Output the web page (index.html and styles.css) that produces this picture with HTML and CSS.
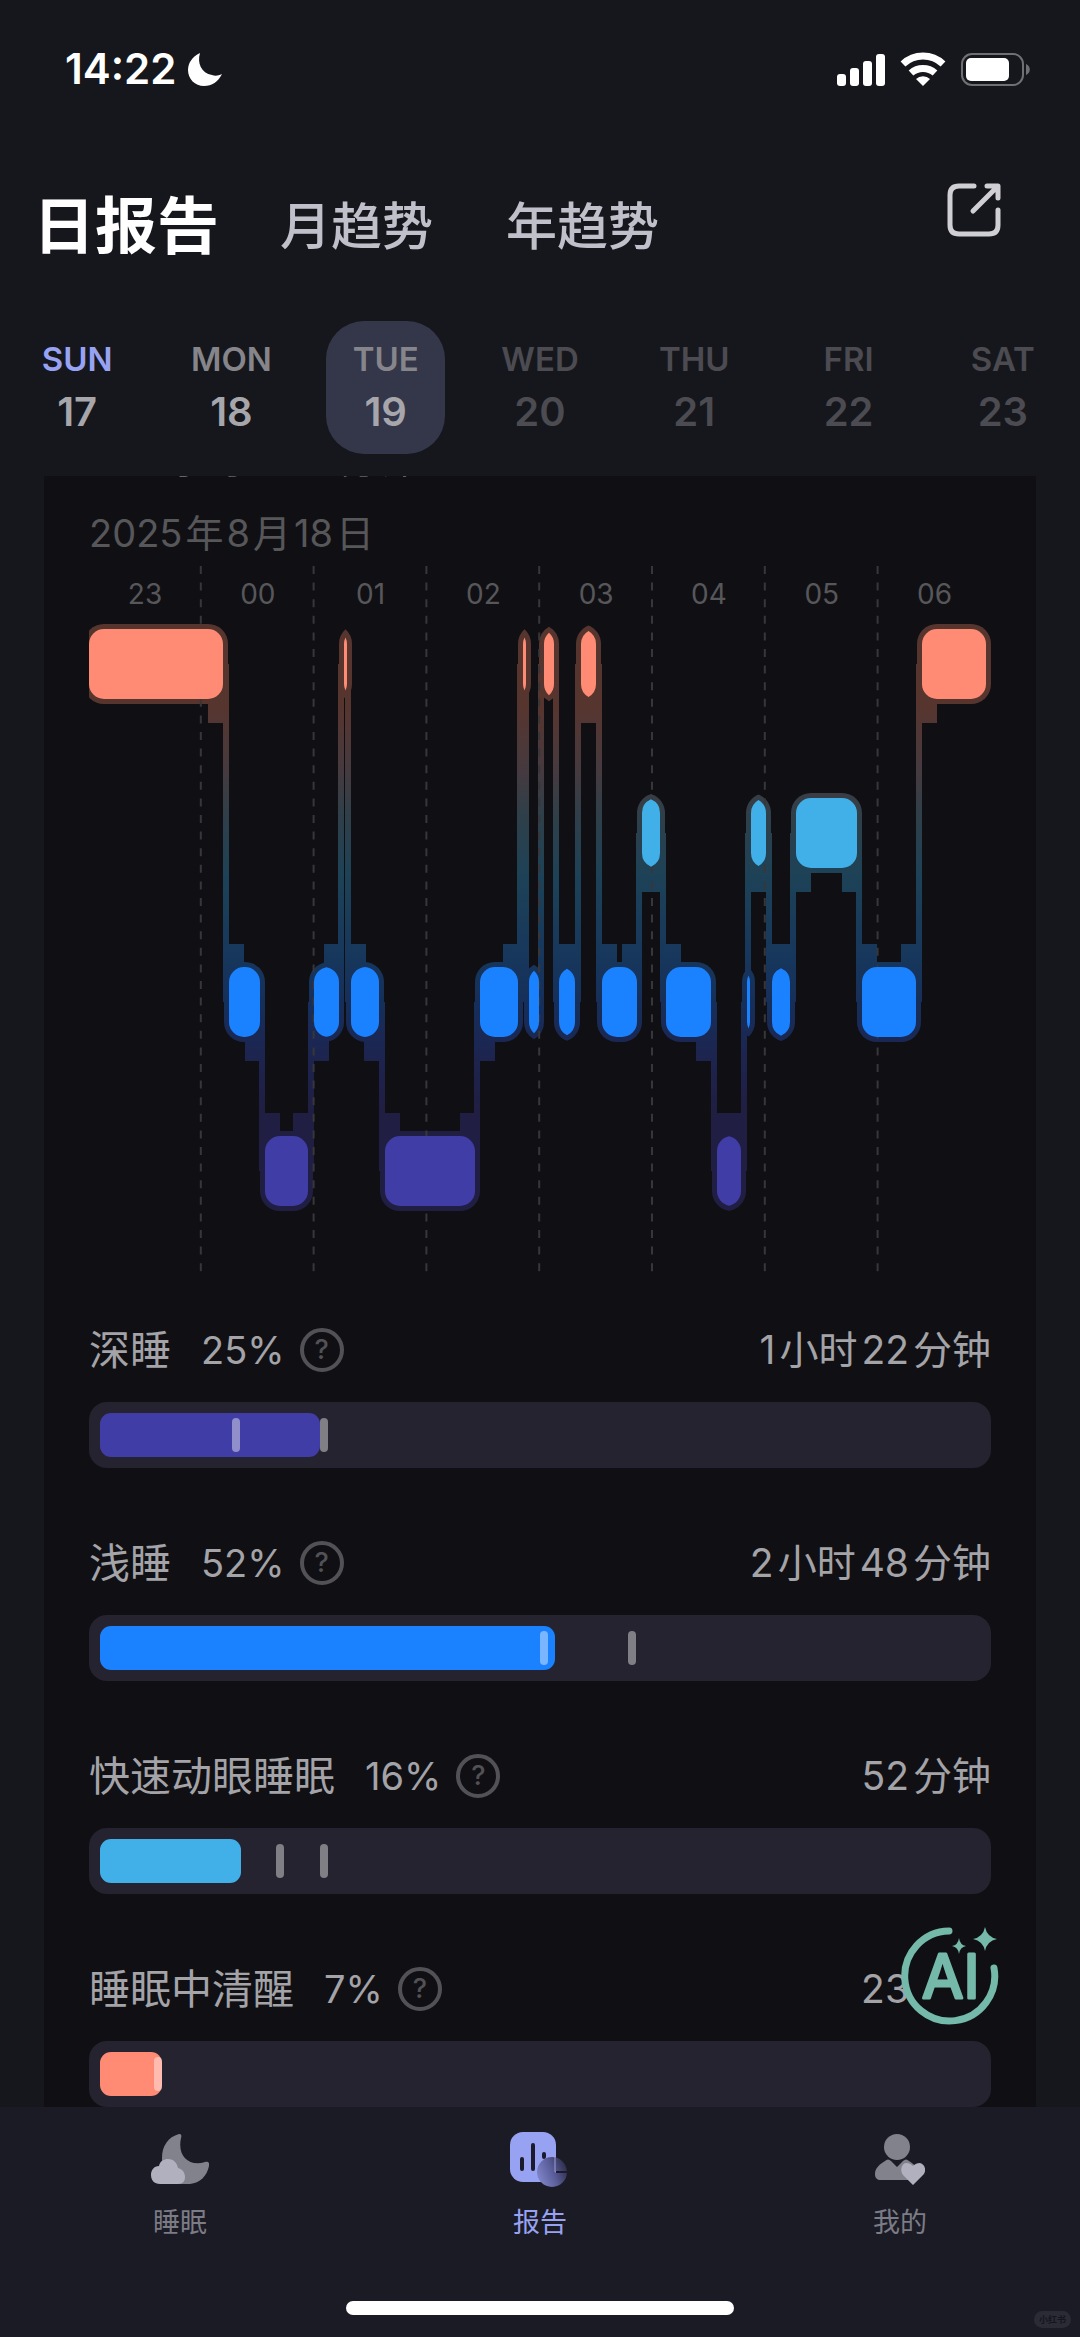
FILE: index.html
```html
<!DOCTYPE html>
<html lang="zh-CN">
<head>
    <meta charset="UTF-8">
    <meta name="viewport" content="width=device-width, initial-scale=1.0">
    <title>日报告</title>
    <link rel="stylesheet" href="styles.css">
</head>
<body>
    <div class="status-bar">
        <span class="time">14:22</span>
        <svg class="dnd" viewBox="0 0 34 34" width="34" height="34"><path d="M12 1C4 5 0 11 0 18c0 9 7 16 16 16 8 0 14-4 18-12-4 2-7 2-10 1C13 21 9 11 12 1z" fill="#fff"/></svg>
        <div class="status-icons">
            <svg viewBox="0 0 48 33" width="48" height="33" fill="#fff">
                <rect x="0" y="21" width="9" height="12" rx="3"/>
                <rect x="13" y="15" width="9" height="18" rx="3"/>
                <rect x="26" y="8" width="9" height="25" rx="3"/>
                <rect x="39" y="1" width="9" height="32" rx="3"/>
            </svg>
            <svg viewBox="0 0 46 34" width="46" height="34" fill="none" stroke="#fff" stroke-width="7">
                <path d="M3 12a29 29 0 0 1 40 0"/>
                <path d="M11 21a18 18 0 0 1 24 0"/>
                <path d="M16 27a10 10 0 0 1 14 0l-7 7z" fill="#fff" stroke="none"/>
            </svg>
            <svg viewBox="0 0 69 33" width="69" height="33">
                <rect x="1" y="1" width="61" height="31" rx="10" fill="none" stroke="#6f7074" stroke-width="2"/>
                <rect x="5" y="5" width="43" height="23" rx="5" fill="#fff"/>
                <path d="M65 11c5 2 5 9 0 11z" fill="#6f7074"/>
            </svg>
        </div>
    </div>

    <header class="header">
        <nav class="tabs">
            <button class="tab active">日报告</button>
            <button class="tab">月趋势</button>
            <button class="tab">年趋势</button>
        </nav>
        <button class="share" aria-label="分享">
            <svg viewBox="0 0 54 54" width="54" height="54" fill="none" stroke="#cfcfd4" stroke-width="5" stroke-linecap="round" stroke-linejoin="round">
                <path d="M27 3H12c-6 0-9 3-9 9v30c0 6 3 9 9 9h30c6 0 9-3 9-9V27"/>
                <path d="M26 28L50 4M40 3h11v12"/>
            </svg>
        </button>
    </header>

    <div class="week">
        <button class="day sunday"><span class="name">SUN</span><span class="num">17</span></button>
        <button class="day"><span class="name">MON</span><span class="num">18</span></button>
        <button class="day selected"><span class="name">TUE</span><span class="num">19</span></button>
        <button class="day future"><span class="name">WED</span><span class="num">20</span></button>
        <button class="day future"><span class="name">THU</span><span class="num">21</span></button>
        <button class="day future"><span class="name">FRI</span><span class="num">22</span></button>
        <button class="day future"><span class="name">SAT</span><span class="num">23</span></button>
    </div>

    <main class="scroll">
        <section class="card">
            <div class="total">05<span>小时</span> 25<span>分钟</span></div>
            <div class="date"><b>2025</b>年<b>8</b>月<b>18</b>日</div>

            <svg class="chart" id="chart" viewBox="0 0 902 706">
                <defs>
                    <linearGradient id="stageFade" gradientUnits="userSpaceOnUse" x1="0" y1="0" x2="0" y2="706">
                        <stop offset="0.2" stop-color="#57352f"/>
                        <stop offset="0.29" stop-color="#453a3f"/>
                        <stop offset="0.35" stop-color="#303f49"/>
                        <stop offset="0.44" stop-color="#1d4257"/>
                        <stop offset="0.55" stop-color="#17375c"/>
                        <stop offset="0.62" stop-color="#162f5a"/>
                        <stop offset="0.69" stop-color="#1c2550"/>
                        <stop offset="0.77" stop-color="#201e43"/>
                    </linearGradient>
                </defs>
                <g id="halo" fill="url(#stageFade)"></g>
                <g id="grid" class="grid"></g>
                <g id="blocks"></g>
                <g id="hours" class="hours"></g>
            </svg>

            <div class="stat">
                <div class="stat-head">
                    <span class="label">深睡</span><span class="percent">25%</span>
                    <button class="help" aria-label="说明">?</button>
                    <span class="duration"><b>1</b>小时<b>22</b>分钟</span>
                </div>
                <div class="bar"><div class="track">
                    <div class="fill deep" style="width: 25%"></div>
                    <i class="mark" style="left: 15%"></i>
                    <i class="mark" style="left: 25%"></i>
                </div></div>
            </div>

            <div class="stat">
                <div class="stat-head">
                    <span class="label">浅睡</span><span class="percent">52%</span>
                    <button class="help" aria-label="说明">?</button>
                    <span class="duration"><b>2</b>小时<b>48</b>分钟</span>
                </div>
                <div class="bar"><div class="track">
                    <div class="fill light" style="width: 51.7%"></div>
                    <i class="mark" style="left: 50%"></i>
                    <i class="mark" style="left: 60%"></i>
                </div></div>
            </div>

            <div class="stat">
                <div class="stat-head">
                    <span class="label">快速动眼睡眠</span><span class="percent">16%</span>
                    <button class="help" aria-label="说明">?</button>
                    <span class="duration"><b>52</b>分钟</span>
                </div>
                <div class="bar"><div class="track">
                    <div class="fill rem" style="width: 16%"></div>
                    <i class="mark" style="left: 20%"></i>
                    <i class="mark" style="left: 25%"></i>
                </div></div>
            </div>

            <div class="stat">
                <div class="stat-head">
                    <span class="label">睡眠中清醒</span><span class="percent">7%</span>
                    <button class="help" aria-label="说明">?</button>
                    <span class="duration"><b>23</b><span class="covered">分钟</span></span>
                </div>
                <div class="bar"><div class="track">
                    <div class="fill awake" style="width: 7.1%"></div>
                    <i class="mark" style="left: 6.1%"></i>
                </div></div>
            </div>
        </section>

        <button class="ai" aria-label="AI">
            <svg viewBox="0 0 100 100" width="100" height="100">
                <path d="M50 6A45 45 0 1 0 95 43" fill="none" stroke="#74b9a9" stroke-width="7" stroke-linecap="round"/>
                <text x="23" y="73" class="ai-text">AI</text>
                <path d="M60 13q1 7 7 8q-6 1-7 8q-1-7-7-8q6-1 7-8zM86 2q2 10 12 12q-10 2-12 12q-2-10-12-12q10-2 12-12z" fill="#74b9a9"/>
            </svg>
        </button>
    </main>

    <footer class="tabbar">
        <nav class="tabbar-items">
            <a href="#sleep">
                <svg viewBox="0 0 58 58" width="58" height="58">
                    <path d="M28 3C17 6 11 15 11 27v24c0 1 1 2 2 2h26c10-1 17-8 19-18 1-3-1-5-4-4-16 5-28-6-24-24 1-3 0-4-2-4z" fill="#82828d"/>
                    <path d="M9 53C3 53 0 49 0 44c0-5 3-9 8-9 1-5 5-7 9-7 6 0 9 4 10 9 4 1 7 4 7 9 0 4-2 7-7 7z" fill="#b1b0be"/>
                </svg>
                <span>睡眠</span>
            </a>
            <a href="#report" class="current">
                <svg viewBox="0 0 62 58" width="62" height="58">
                    <defs>
                        <linearGradient id="pie" x1="0" y1="0.7" x2="1" y2="0.3">
                            <stop offset="0" stop-color="#8087cb"/>
                            <stop offset="0.5" stop-color="#5c5f9c"/>
                            <stop offset="1" stop-color="#2c2c48"/>
                        </linearGradient>
                    </defs>
                    <rect x="1" y="1" width="46" height="50" rx="13" fill="#98a2f2"/>
                    <path d="M13 28v10M24 14v24M35 23v3" stroke="#1b1b2c" stroke-width="4" stroke-linecap="round"/>
                    <circle cx="43" cy="41" r="15" fill="url(#pie)"/>
                    <path d="M46 26v15h13" fill="none" stroke="#9aa0d8" stroke-width="1"/>
                    <path d="M47 41h12" stroke="#1b1b2c" stroke-width="2"/>
                </svg>
                <span>报告</span>
            </a>
            <a href="#mine">
                <svg viewBox="0 0 50 58" width="50" height="58">
                    <circle cx="22" cy="16" r="13" fill="#82828d"/>
                    <path d="M10 30c2-2 4-2 6 0l6 6 6-6c2-2 4-2 6 0 5 3 9 7 9 13 0 4-2 6-5 6H6c-4 0-6-2-6-6 0-6 5-10 10-13z" fill="#82828d"/>
                    <path d="M38 54L28 44c-3-4-2-11 3-12 3 0 5 1 7 3 2-2 4-3 7-3 5 1 7 8 3 12z" fill="#b1b0be"/>
                </svg>
                <span>我的</span>
            </a>
        </nav>
        <div class="home-indicator"></div>
        <span class="watermark">小红书</span>
    </footer>

<script>
    // top edge and color of each sleep stage row
    const rows = {
        awake: { y: 63, color: '#ff8b75' },
        rem: { y: 232, color: '#41b0e9' },
        light: { y: 401, color: '#1b82ff' },
        deep: { y: 570, color: '#413da6' }
    };
    const blockHeight = 70;

    // [stage, start, end]
    const stages = [
        ['awake', 0, 134], ['light', 140, 171], ['deep', 176, 219], ['light', 225, 250],
        ['awake', 255, 258], ['light', 262, 290], ['deep', 296, 386], ['light', 391, 429],
        ['awake', 434, 437], ['light', 440, 450], ['awake', 455, 465], ['light', 470, 486],
        ['awake', 492, 507], ['light', 513, 548], ['rem', 553, 571], ['light', 577, 622],
        ['deep', 628, 652], ['light', 658, 661], ['rem', 662, 677], ['light', 683, 701],
        ['rem', 707, 768], ['light', 773, 827], ['awake', 833, 897]
    ];

    // Rounded block, narrow ones end in a point where the two corners meet
    function blockPath(x1, x2, y1, y2, r) {
        const half = Math.min(r, (x2 - x1) / 2);
        const rise = Math.sqrt(r * r - (r - half) * (r - half));
        const arc = `A${r} ${r} 0 0 1`;
        return `M${x1} ${y1 + r}${arc} ${x1 + half} ${y1 + r - rise}H${x2 - half}${arc} ${x2} ${y1 + r}` +
            `V${y2 - r}${arc} ${x2 - half} ${y2 - r + rise}H${x1 + half}${arc} ${x1} ${y2 - r}Z`;
    }

    function rect(x, y, w, h) {
        return `<rect x="${x}" y="${y}" width="${w}" height="${h}"/>`;
    }

    let halo = '';
    let blocks = '';
    stages.forEach(([stage, x1, x2], i) => {
        const y = rows[stage].y;
        halo += `<path d="${blockPath(x1 - 5, x2 + 5, y - 5, y + blockHeight + 5, 20)}"/>`;
        blocks += `<path d="${blockPath(x1, x2, y, y + blockHeight, 15)}" fill="${rows[stage].color}"/>`;

        // small steps where a connector joins the block
        const step = Math.min(15, x2 - x1);
        [stages[i - 1], stages[i + 1]].forEach((other, side) => {
            if (!other || step < 15) return;
            const x = side === 0 ? x1 : x2 - step;
            const below = rows[other[0]].y > y;
            halo += rect(x, below ? y + blockHeight - 15 : y - 23, step, 39);
        });

        // connector to the next stage
        const next = stages[i + 1];
        if (next) {
            const top = Math.min(y, rows[next[0]].y) + blockHeight / 2;
            const bottom = Math.max(y, rows[next[0]].y) + blockHeight / 2;
            halo += rect(next[1] - 6, top, 6, bottom - top);
        }
    });
    document.getElementById('halo').innerHTML = halo;
    document.getElementById('blocks').innerHTML = blocks;

    let grid = '';
    let hours = '';
    ['23', '00', '01', '02', '03', '04', '05', '06'].forEach((hour, i) => {
        const x = i * 112.8 - 1;
        if (i > 0) grid += `<line x1="${x}" y1="0" x2="${x}" y2="706"/>`;
        hours += `<text x="${x + 57}" y="38">${hour}</text>`;
    });
    document.getElementById('grid').innerHTML = grid;
    document.getElementById('hours').innerHTML = hours;
</script>
</body>
</html>
```
FILE: styles.css
```css
* {
    box-sizing: border-box;
}
body {
    margin: 0;
    height: 100vh;
    display: flex;
    flex-direction: column;
    overflow: hidden;
    background: #16171c;
    color: #a3a3a8;
    font-family: Inter, "Noto Sans CJK SC", sans-serif;
}
button {
    padding: 0;
    border: none;
    background: none;
    color: inherit;
    font-family: inherit;
    cursor: pointer;
}
svg {
    display: block;
}
.status-bar {
    display: flex;
    align-items: center;
    height: 50px;
    margin-top: 44px;
    padding: 0 50px 0 65px;
}
.time {
    color: #fff;
    font-size: 42px;
    font-weight: 600;
    line-height: 50px;
}
.dnd {
    margin-left: 12px;
}
.status-icons {
    display: flex;
    align-items: center;
    gap: 15px;
    margin-left: auto;
}
.header {
    display: flex;
    justify-content: space-between;
    align-items: flex-start;
    padding: 89px 79px 0 33px;
}
.tabs {
    display: flex;
    align-items: center;
    gap: 73px;
    padding-top: 8px;
}
.tab {
    color: #c0c0ca;
    font-size: 51px;
    font-weight: 500;
    line-height: 72px;
}
.tab.active {
    margin-right: -12px;
    color: #fff;
    font-size: 62px;
    font-weight: 700;
}
.week {
    display: grid;
    grid-template-columns: repeat(7, 1fr);
    justify-items: center;
    margin: 58px 0 22px;
}
.day {
    display: flex;
    flex-direction: column;
    align-items: center;
    gap: 9px;
    width: 119px;
    padding: 18px 0;
    border-radius: 38px;
    font-weight: 600;
}
.day .name {
    color: #85858a;
    font-size: 33px;
    line-height: 40px;
}
.day .num {
    color: #a6a6ab;
    font-size: 40px;
    line-height: 48px;
}
.day.sunday .name {
    color: #98a2f2;
}
.day.selected {
    background: #34364a;
}
.day.future .name,
.day.future .num {
    color: #4b4b51;
}
.scroll {
    position: relative;
    flex: 1;
    min-height: 0;
    overflow: hidden;
}
.card {
    margin: 0 44px;
    padding: 0 45px 60px;
    background: #101014;
}
.total {
    margin-top: -66px;
    color: #c8c8cc;
    font-size: 64px;
    line-height: 80px;
}
.total span {
    font-size: 38px;
    color: #66666a;
}
.date {
    margin-top: 10px;
    color: #57575a;
    font-size: 38px;
    line-height: 48px;
}
.date b,
.duration b {
    margin: 0 4px;
    font-weight: inherit;
}
.date b {
    margin: 0 3px;
}
.date b:first-child {
    margin-left: 0;
}
.chart {
    width: 100%;
    height: auto;
    margin-top: 9px;
}
.grid line {
    stroke: #37373b;
    stroke-width: 2;
    stroke-dasharray: 8 8.6;
}
.hours text {
    fill: #57575a;
    font-size: 28px;
    text-anchor: middle;
}
.stat {
    margin-top: 73px;
}
.chart + .stat {
    margin-top: 56px;
}
.stat-head {
    display: flex;
    align-items: center;
    height: 44px;
    line-height: 44px;
}
.label {
    font-size: 41px;
}
.percent {
    margin-left: 30px;
    font-size: 38px;
}
.help {
    width: 44px;
    height: 44px;
    margin-left: 15px;
    border: 4px solid #525256;
    border-radius: 50%;
    color: #525256;
    font-size: 27px;
    font-weight: 500;
    line-height: 36px;
}
.duration {
    margin-left: auto;
    font-size: 39px;
}
.covered {
    visibility: hidden;
}
.bar {
    margin-top: 30px;
    padding: 11px;
    border-radius: 18px;
    background: #25232f;
}
.track {
    position: relative;
    height: 44px;
}
.fill {
    height: 100%;
    border-radius: 11px;
}
.fill.deep {
    background: #413da6;
}
.fill.light {
    background: #1b82ff;
}
.fill.rem {
    background: #41b0e9;
}
.fill.awake {
    background: #ff8b75;
}
.mark {
    position: absolute;
    top: 5px;
    width: 8px;
    height: 34px;
    border-radius: 4px;
    background: rgba(255, 255, 255, 0.42);
}
.ai {
    position: absolute;
    right: 81px;
    bottom: 82px;
}
.ai-text {
    fill: #74b9a9;
    stroke: #74b9a9;
    stroke-width: 3;
    stroke-linejoin: round;
    font-size: 60px;
    font-weight: 400;
}
.tabbar {
    position: relative;
    height: 230px;
    padding-top: 24px;
    background: #1b1b25;
}
.tabbar-items {
    display: grid;
    grid-template-columns: repeat(3, 1fr);
}
.tabbar-items a {
    display: flex;
    flex-direction: column;
    align-items: center;
    gap: 14px;
    color: #7c7c86;
    font-size: 27px;
    line-height: 40px;
    text-decoration: none;
}
.tabbar-items a.current {
    color: #98a2f2;
}
.home-indicator {
    width: 36%;
    height: 14px;
    margin: 58px auto 0;
    border-radius: 7px;
    background: #fff;
}
.watermark {
    position: absolute;
    right: 9px;
    bottom: 9px;
    padding: 0 5px;
    border-radius: 9px;
    background: #2b2b35;
    color: #15151d;
    font-size: 9px;
    font-weight: 700;
    line-height: 17px;
}
```
